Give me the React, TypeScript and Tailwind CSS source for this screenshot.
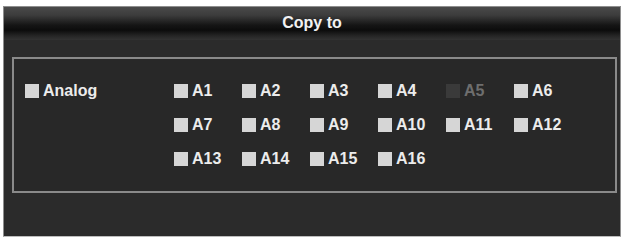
import React from "react";

const rows: { label: string; disabled?: boolean }[][] = [
  [{ label: "A1" }, { label: "A2" }, { label: "A3" }, { label: "A4" }, { label: "A5", disabled: true }, { label: "A6" }],
  [{ label: "A7" }, { label: "A8" }, { label: "A9" }, { label: "A10" }, { label: "A11" }, { label: "A12" }],
  [{ label: "A13" }, { label: "A14" }, { label: "A15" }, { label: "A16" }],
];

function Item({ label, disabled }: { label: string; disabled?: boolean }) {
  return (
    <div className="flex items-center gap-[4px] h-[34px]">
      <div className={disabled ? "w-[14px] h-[14px] bg-[#3a3a3a]" : "w-[14px] h-[14px] bg-[#d6d6d6]"} />
      <span className={disabled ? "text-[16px] font-bold text-[#6e6e6e] leading-none" : "text-[16px] font-bold text-[#ececec] leading-none"}>
        {label}
      </span>
    </div>
  );
}

export default function App() {
  return (
    <div className="w-[624px] h-[237px] bg-white pt-[6px] pl-[3px]" style={{ fontFamily: '"Liberation Sans", Arial, sans-serif' }}>
      <div className="w-[618px] h-[231px] border border-[#8e8e8e] border-b-[#bdbdbd] bg-[#2b2b2b] flex flex-col">
        <div className="h-[33px] flex items-center justify-center bg-[linear-gradient(to_bottom,#4a4a4a_0%,#3c3c3c_25%,#151515_55%,#0c0c0c_70%,#262626_88%,#333333_100%)]">
          <span className="text-[16px] font-bold text-[#f2f2f2] leading-none -mt-[2px]">Copy to</span>
        </div>
        <div className="pt-[17px] pl-[8px] pr-[3px]">
          <div className="border-2 border-[#8a8a8a] bg-[#282828] pl-[11px] pt-[15px] pb-[15px] flex">
            <div className="w-[149px]">
              <Item label="Analog" />
            </div>
            <div className="flex flex-col">
              {rows.map((r, i) => (
                <div key={i} className="flex">
                  {r.map((it) => (
                    <div key={it.label} className="w-[68px]">
                      <Item label={it.label} disabled={it.disabled} />
                    </div>
                  ))}
                </div>
              ))}
            </div>
          </div>
        </div>
      </div>
    </div>
  );
}
